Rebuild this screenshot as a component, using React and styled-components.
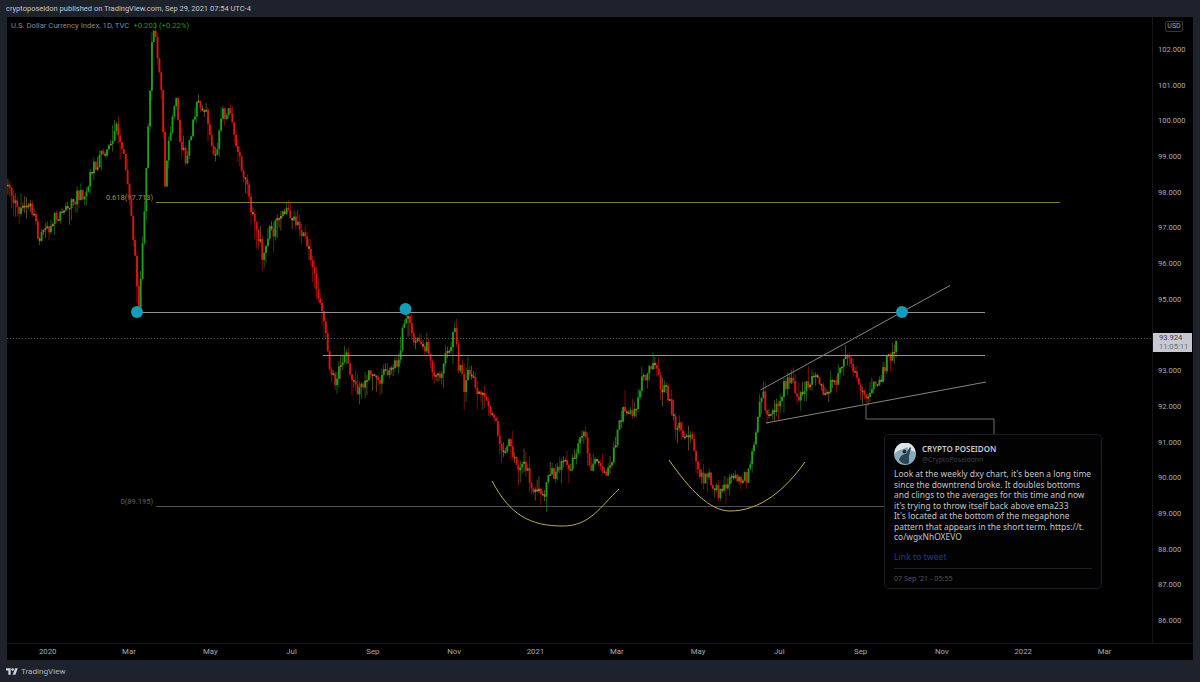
import React from "react";
import styled, { createGlobalStyle } from "styled-components";

const FRAME = "#1e222d";
const UI_FONT = 'Roboto, "Noto Sans", "Liberation Sans", sans-serif';
const TWEET_FONT = '"Noto Sans", "Open Sans", "Liberation Sans", sans-serif';

const PRICES = ["102.000", "101.000", "100.000", "99.000", "98.000", "97.000", "96.000", "95.000", "", "93.000", "92.000", "91.000", "90.000", "89.000", "88.000", "87.000", "86.000"];
const MONTHS = ["2020", "Mar", "May", "Jul", "Sep", "Nov", "2021", "Mar", "May", "Jul", "Sep", "Nov", "2022", "Mar"];

// rough trace of the closing price, in page pixels
const TRACE = [
  [7, 185], [12, 205], [20, 212], [30, 205], [38, 238], [45, 228], [52, 222], [62, 212], [72, 208], [82, 195], [95, 170], [105, 150], [114, 127],
  [120, 150], [127, 190], [131, 225], [134, 255], [137, 300], [139, 292], [141, 250], [144, 205], [146, 150], [149, 85], [152, 25], [155, 40], [158, 70], [161, 95],
  [164, 175], [169, 125], [175, 92], [180, 140], [186, 158], [190, 130], [197, 105], [205, 112], [210, 150], [215, 165], [221, 118], [228, 108],
  [234, 135], [243, 175], [250, 215], [256, 238], [262, 258], [268, 235], [277, 222], [288, 205], [296, 228], [305, 243], [312, 262], [318, 300],
  [324, 340], [329, 365], [335, 385], [340, 360], [345, 350], [350, 385], [356, 392], [362, 385], [369, 366], [377, 378], [385, 368], [392, 374],
  [398, 352], [403, 322], [407, 318], [412, 342], [420, 348], [427, 352], [433, 372], [441, 365], [448, 350], [454, 332], [458, 370], [464, 385],
  [470, 372], [477, 385], [484, 392], [490, 412], [496, 428], [501, 452], [506, 440], [512, 452], [518, 465], [524, 458], [530, 478], [537, 490],
  [542, 502], [548, 470], [556, 470], [562, 458], [568, 470], [575, 445], [582, 428], [590, 462], [598, 470], [605, 482], [610, 460], [616, 430],
  [622, 402], [628, 410], [635, 412], [641, 385], [648, 368], [653, 360], [660, 388], [667, 400], [675, 430], [683, 440], [690, 432], [697, 462],
  [705, 470], [713, 482], [722, 488], [730, 470], [738, 472], [748, 462], [753, 440], [758, 410], [762, 394], [768, 418], [775, 408], [782, 395],
  [790, 378], [798, 392], [806, 382], [815, 375], [822, 402], [830, 385], [838, 372], [845, 350], [852, 372], [860, 385], [866, 402], [872, 385],
  [880, 380], [886, 360], [891, 358], [894, 350], [897, 337],
];

const priceAt = (x) => {
  for (let i = 1; i < TRACE.length; i++) {
    if (x <= TRACE[i][0]) {
      const [x0, y0] = TRACE[i - 1];
      const [x1, y1] = TRACE[i];
      return y0 + ((y1 - y0) * (x - x0)) / (x1 - x0);
    }
  }
  return TRACE[TRACE.length - 1][1];
};

const buildCandles = () => {
  let seed = 4127;
  const rand = () => {
    seed = (seed * 16807) % 2147483647;
    return seed / 2147483647;
  };
  const list = [];
  let prev = priceAt(7);
  let swing = 0;
  for (let x = 7; x <= 897; x += 1.87) {
    swing = 0.8 * swing + (rand() - 0.5) * 9;
    const close = priceAt(x) + swing + (rand() - 0.5) * 11;
    const top = Math.min(prev, close);
    const bottom = Math.max(prev, close);
    const height = Math.max(bottom - top, 1.5);
    list.push({
      x,
      top,
      height,
      wickTop: Math.max(top - rand() * rand() * 18, 17),
      wickBottom: bottom + rand() * rand() * 20,
      color: height < 2.6 ? "#a87c24" : close < prev ? "#1f9e1a" : "#dd1212",
    });
    prev = close;
  }
  return list;
};

const CANDLES = buildCandles();

const GlobalStyle = createGlobalStyle`
  html, body {
    margin: 0;
    padding: 0;
    background: ${FRAME};
  }
`;

const Page = styled.div`
  width: 1200px;
  height: 682px;
  display: flex;
  flex-direction: column;
  background: ${FRAME};
  font-family: ${UI_FONT};
  overflow: hidden;
`;

const TopBar = styled.div`
  height: 17px;
  padding-left: 6px;
  font-size: 7.5px;
  line-height: 17px;
  color: #c6c8ce;
`;

const ChartFrame = styled.div`
  width: 1186px;
  margin-left: 7px;
  height: 643px;
  display: flex;
  flex-direction: column;
  background: #000;
  position: relative;
`;

const PaneRow = styled.div`
  height: 626px;
  display: flex;
`;

const Plot = styled.div`
  width: 1145px;
  position: relative;
`;

const ChartSvg = styled.svg`
  display: block;
  position: absolute;
  inset: 0;
`;

const Legend = styled.div`
  position: absolute;
  top: 2px;
  left: 4px;
  display: flex;
  gap: 4px;
  font-size: 7.7px;
  line-height: 14px;
  color: #85888f;
`;

const LegendChange = styled.span`
  color: #1f9a1c;
`;

const DrawingLabel = styled.div`
  position: absolute;
  right: ${(p) => p.$right}px;
  top: ${(p) => p.$top}px;
  font-size: 7.5px;
  line-height: 12px;
  color: ${(p) => p.$color};
`;

const PriceAxis = styled.div`
  width: 41px;
  box-sizing: border-box;
  padding-top: 15px;
  border-left: 1px solid #14161c;
  position: relative;
`;

const PriceLabel = styled.div`
  height: 35.7px;
  line-height: 35.7px;
  padding-left: 5px;
  font-size: 7.6px;
  color: #a9abb0;
`;

const CurrencyBadge = styled.div`
  position: absolute;
  top: 4px;
  left: 12px;
  width: 18px;
  height: 11px;
  box-sizing: border-box;
  border: 1px solid #33363d;
  border-radius: 2px;
  font-size: 7px;
  line-height: 9px;
  text-align: center;
  color: #a9abb0;
`;

const LastPriceTag = styled.div`
  position: absolute;
  top: 316px;
  left: 0;
  width: 39px;
  height: 19px;
  padding: 1px 0 0 6px;
  box-sizing: border-box;
  background: #c5c9d3;
  font-size: 7.6px;
  line-height: 8.5px;
  color: #3c3f46;
`;

const Countdown = styled.div`
  color: #6d7079;
`;

const TimeAxis = styled.div`
  height: 17px;
  display: flex;
  border-top: 1px solid #14161c;
  box-sizing: border-box;
`;

const TimeLabel = styled.div`
  width: 81.3px;
  text-align: center;
  font-size: 7.8px;
  line-height: 16px;
  color: #a9abb0;
`;

const Footer = styled.div`
  height: 22px;
  padding-left: 6px;
  display: flex;
  align-items: center;
  gap: 3px;
  font-size: 8.1px;
  color: #b2b5be;
`;

const TweetCard = styled.div`
  position: absolute;
  left: 877px;
  top: 417px;
  width: 218px;
  height: 155px;
  box-sizing: border-box;
  padding: 8px 9px 0;
  background: #020203;
  border: 1px solid #1b1e24;
  border-radius: 5px;
  color: #c3c4c7;
  font-family: ${TWEET_FONT};
`;

const TweetHead = styled.div`
  display: flex;
  align-items: center;
  gap: 6px;
  height: 22px;
  margin-bottom: 4px;
`;

const AuthorName = styled.div`
  font-size: 8px;
  line-height: 11px;
  font-weight: 600;
  color: #c9cacc;
`;

const AuthorHandle = styled.div`
  font-size: 6.8px;
  line-height: 11px;
  color: #3d4048;
`;

const TweetBody = styled.div`
  font-size: 8.45px;
  line-height: 10.5px;
  white-space: pre-line;
`;

const TweetLink = styled.div`
  margin-top: 8px;
  font-size: 8.7px;
  line-height: 12px;
  color: #1c3a8c;
`;

const TweetDate = styled.div`
  margin-top: 5px;
  padding-top: 3px;
  border-top: 1px solid #202226;
  font-size: 7.2px;
  line-height: 12px;
  color: #52555b;
`;

const Candles = () => (
  <>
    {CANDLES.map((c) => (
      <g key={c.x} fill={c.color}>
        <rect x={c.x + 0.55} y={c.wickTop} width="0.7" height={c.wickBottom - c.wickTop} opacity="0.8" />
        <rect x={c.x} y={c.top} width="1.9" height={c.height} />
      </g>
    ))}
  </>
);

const Drawings = () => (
  <g fill="none">
    <path d="M7 338.5H1152" stroke="#6a6c70" strokeWidth="0.8" strokeDasharray="1 2" />
    <path d="M156 202.5H1060" stroke="#85793f" />
    <path d="M156 506.5H885" stroke="#505256" />
    <path d="M323 355.5H985" stroke="#97977f" />
    <path d="M137 312.5H985" stroke="#929292" />
    <path d="M760.5 390L950 285.5" stroke="#858585" />
    <path d="M766 423L986 382" stroke="#858585" />
    <path d="M866 405V419H994V434" stroke="#6e6e6e" />
    <path d="M492 481C510 515 530 526 563 526C590 526 600 507 619 489" stroke="#b9a95a" />
    <path d="M669 460C690 490 710 511 730 511C760 511 785 490 805 462" stroke="#c2b054" />
    <circle cx="137" cy="312" r="6" fill="#159cb8" />
    <circle cx="405.500" cy="309" r="6" fill="#159cb8" />
    <circle cx="902" cy="312" r="6" fill="#159cb8" />
  </g>
);

const Avatar = () => (
  <svg width="22" height="22" viewBox="0 0 22 22">
    <circle cx="11" cy="11" r="11" fill="#8ba9b8" />
    <path d="M0.500 11A10.500 10.500 0 0 1 21.500 9C17 7 15 8 13 4C9 7 4 6 0.500 11Z" fill="#dbe6ea" />
    <path d="M5 17C6 13 9 11 12 11L16 4L17 5L15 13C15 16 15 18 15 20C12 22 8 21 5 17Z" fill="#2b4554" />
    <circle cx="10.500" cy="8.500" r="2" fill="#1a2c36" />
  </svg>
);

const TvLogo = () => (
  <svg width="12" height="7" viewBox="0 4 36 20" fill="#d0d3da">
    <path d="M14 24H7V11H0V4h14v20zM28 24h-8l7.500-20h8L28 24z" />
    <circle cx="20" cy="8" r="4" />
  </svg>
);

const App = () => (
  <Page>
    <GlobalStyle />
    <TopBar>cryptoposeidon published on TradingView.com, Sep 29, 2021 07:54 UTC-4</TopBar>
    <ChartFrame>
      <PaneRow>
        <Plot>
          <Legend>
            <span>U.S. Dollar Currency Index, 1D, TVC</span>
            <LegendChange>+0.203 (+0.22%)</LegendChange>
          </Legend>
          <DrawingLabel $right={999} $top={175} $color="#a3963f">0.618(97.713)</DrawingLabel>
          <DrawingLabel $right={999} $top={479} $color="#5f6166">0(89.195)</DrawingLabel>
          <ChartSvg width="1145" height="626" viewBox="7 17 1145 626">
            <Candles />
            <Drawings />
          </ChartSvg>
        </Plot>
        <PriceAxis>
          <CurrencyBadge>USD</CurrencyBadge>
          {PRICES.map((price, i) => (
            <PriceLabel key={i}>{price}</PriceLabel>
          ))}
          <LastPriceTag>
            93.924
            <Countdown>11:05:11</Countdown>
          </LastPriceTag>
        </PriceAxis>
      </PaneRow>
      <TimeAxis>
        {MONTHS.map((month, i) => (
          <TimeLabel key={i}>{month}</TimeLabel>
        ))}
      </TimeAxis>
      <TweetCard>
        <TweetHead>
          <Avatar />
          <div>
            <AuthorName>CRYPTO POSEIDON</AuthorName>
            <AuthorHandle>@CryptoPoseidonn</AuthorHandle>
          </div>
        </TweetHead>
        <TweetBody>
          {"Look at the weekly dxy chart, it's been a long time\nsince the downtrend broke. It doubles bottoms\nand clings to the averages for this time and now\nit's trying to throw itself back above ema233\nIt's located at the bottom of the megaphone\npattern that appears in the short term. https://t.\nco/wgxNhOXEVO"}
        </TweetBody>
        <TweetLink>Link to tweet</TweetLink>
        <TweetDate>07 Sep '21 - 05:55</TweetDate>
      </TweetCard>
    </ChartFrame>
    <Footer>
      <TvLogo />
      TradingView
    </Footer>
  </Page>
);

export default App;
